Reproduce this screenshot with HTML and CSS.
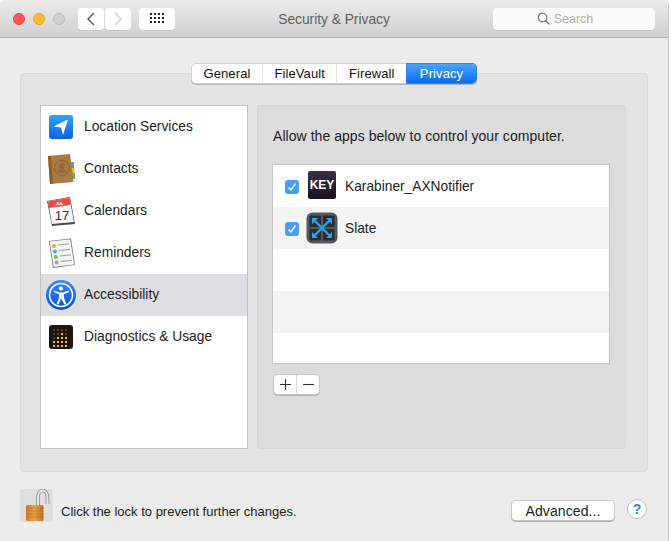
FILE: index.html
```html
<!DOCTYPE html>
<html lang="en">

<head>
	<meta charset="UTF-8">
	<title>Security &amp; Privacy</title>
	<link rel="stylesheet" href="styles.css">
</head>

<body>
	<div class="window">
		<div class="titlebar">
			<div class="lights">
				<span class="light red"></span>
				<span class="light yellow"></span>
				<span class="light off"></span>
			</div>
			<div class="nav">
				<button class="nav-btn" type="button">
					<svg width="10" height="14" viewBox="0 0 10 14"><path d="M8 1 2 7l6 6" fill="none" stroke="#555" stroke-width="1.4"/></svg>
				</button>
				<button class="nav-btn" type="button">
					<svg width="10" height="14" viewBox="0 0 10 14"><path d="M2 1l6 6-6 6" fill="none" stroke="#ccc" stroke-width="1.4"/></svg>
				</button>
			</div>
			<button class="grid-btn" type="button">
				<svg width="15" height="11" viewBox="0 0 15 11" fill="#222">
					<rect x="0" y="0" width="2" height="2"/><rect x="4" y="0" width="2" height="2"/><rect x="8" y="0" width="2" height="2"/><rect x="12" y="0" width="2" height="2"/>
					<rect x="0" y="4" width="2" height="2"/><rect x="4" y="4" width="2" height="2"/><rect x="8" y="4" width="2" height="2"/><rect x="12" y="4" width="2" height="2"/>
					<rect x="0" y="8" width="2" height="2"/><rect x="4" y="8" width="2" height="2"/><rect x="8" y="8" width="2" height="2"/><rect x="12" y="8" width="2" height="2"/>
				</svg>
			</button>
			<div class="title">Security &amp; Privacy</div>
			<div class="search">
				<svg width="13" height="13" viewBox="0 0 13 13"><circle cx="5.5" cy="5.5" r="4.3" fill="none" stroke="#666" stroke-width="1.1"/><path d="M8.6 8.6 12.4 12.4" stroke="#666" stroke-width="1.3"/></svg>
				<span>Search</span>
			</div>
		</div>

		<div class="content">
			<div class="group">
				<div class="tabs">
					<span class="tab">General</span>
					<span class="tab">FileVault</span>
					<span class="tab">Firewall</span>
					<span class="tab selected">Privacy</span>
				</div>
				<div class="panes">
					<ul class="services">
						<li class="service">
							<svg class="service-icon" viewBox="0 0 26 26">
								<defs><linearGradient id="loc" x1="0" y1="0" x2="0" y2="1"><stop offset="0" stop-color="#2fa4f7"/><stop offset="1" stop-color="#0a64e0"/></linearGradient></defs>
								<rect x="1" y="1" width="24" height="24" rx="3" fill="url(#loc)"/>
								<path d="M20 5.5 5.5 12.5 13 13.5 15 21z" fill="#fff"/>
							</svg>
							<span class="service-name">Location Services</span>
						</li>
						<li class="service">
							<svg class="tall-icon" viewBox="0 0 30 30">
								<rect x="25" y="8" width="3" height="6" fill="#5a9ad8"/>
								<rect x="25.500" y="14" width="3" height="5" fill="#e6b13c"/>
								<rect x="26" y="19" width="3" height="6" fill="#6db55a"/>
								<path d="M2 2 24 0 27.500 28 4 30z" fill="#ab7a40"/>
								<path d="M2 2 5 1.700 7 29.700 4 30z" fill="#8a5f2e"/>
								<circle cx="16" cy="14" r="7.500" fill="none" stroke="#8f6431" stroke-width="1"/>
								<circle cx="16" cy="12" r="3" fill="#96693a"/>
								<path d="M10.500 19c1-3.500 3-4 5.500-4s4.500.5 5.500 4z" fill="#96693a"/>
							</svg>
							<span class="service-name">Contacts</span>
						</li>
						<li class="service">
							<svg class="tall-icon" viewBox="0 0 30 30">
								<path d="M1 5 24 1 29 28 6 30z" fill="#4b4b4b"/>
								<path d="M2 5.500 23.500 1.800 28 26 6 28z" fill="#f8f8f8"/>
								<path d="M2 5.500 23.500 1.800 24.700 9 3 12z" fill="#ee4b45"/>
								<text x="13.500" y="8.800" class="cal-month">JUL</text>
								<text x="16" y="24" class="cal-day">17</text>
							</svg>
							<span class="service-name">Calendars</span>
						</li>
						<li class="service">
							<svg class="tall-icon" viewBox="0 0 30 30">
								<path d="M3 3 25 0.500 29 27 7 30z" fill="#6f6f6f"/>
								<path d="M3.800 3.600 24.300 1.300 28.200 26.400 7.600 29z" fill="#f4f4f0"/>
								<circle cx="8" cy="8" r="2" fill="#f2a32c"/>
								<circle cx="9" cy="13.500" r="2" fill="#3fa7f0"/>
								<circle cx="9.800" cy="19" r="2" fill="#63c94c"/>
								<circle cx="10.600" cy="24.500" r="2" fill="#c77fdc"/>
								<path d="M12 7 23 5.800M13 12.500 24 11.300M13.800 18 25 16.800M14.600 23.500 26 22.300" stroke="#888" stroke-width=".8"/>
							</svg>
							<span class="service-name">Reminders</span>
						</li>
						<li class="service active">
							<svg class="access-icon" viewBox="0 0 32 32">
								<defs><linearGradient id="acc" x1="0" y1="0" x2="0" y2="1"><stop offset="0" stop-color="#3b8cf5"/><stop offset="1" stop-color="#0b4fd6"/></linearGradient></defs>
								<circle cx="16" cy="16" r="15" fill="url(#acc)"/>
								<circle cx="16" cy="16" r="11.500" fill="none" stroke="#fff" stroke-width="1.500"/>
								<circle cx="16" cy="9.500" r="2" fill="#fff"/>
								<path d="M8.500 11.500 14 13.500h4l5.500-2 .5 1.500-5 2.200v3.500l2.300 6.300-1.700.6L16 19.500l-2.600 6.100-1.700-.6 2.300-6.300v-3.500L9 13z" fill="#fff"/>
							</svg>
							<span class="service-name">Accessibility</span>
						</li>
						<li class="service">
							<svg class="service-icon" viewBox="0 0 26 26">
								<rect x="1" y="1" width="24" height="24" rx="3" fill="#1d1511"/>
								<g fill="#5b3a1c">
									<rect x="5" y="5" width="2" height="2"/><rect x="9" y="5" width="2" height="2"/><rect x="13" y="5" width="2" height="2"/><rect x="17" y="5" width="2" height="2"/>
									<rect x="5" y="9" width="2" height="2"/><rect x="9" y="9" width="2" height="2"/><rect x="17" y="9" width="2" height="2"/>
									<rect x="5" y="13" width="2" height="2"/>
								</g>
								<g fill="#f5b74a">
									<rect x="13" y="9" width="2" height="2"/>
									<rect x="9" y="13" width="2" height="2"/><rect x="13" y="13" width="2" height="2"/><rect x="17" y="13" width="2" height="2"/>
									<rect x="5" y="17" width="2" height="2"/><rect x="9" y="17" width="2" height="2"/><rect x="13" y="17" width="2" height="2"/><rect x="17" y="17" width="2" height="2"/>
									<rect x="5" y="21" width="2" height="2"/><rect x="9" y="21" width="2" height="2"/><rect x="13" y="21" width="2" height="2"/><rect x="17" y="21" width="2" height="2"/>
								</g>
							</svg>
							<span class="service-name">Diagnostics &amp; Usage</span>
						</li>
					</ul>
					<div class="detail">
						<p class="detail-text">Allow the apps below to control your computer.</p>
						<div class="apps">
							<div class="app">
								<span class="check"><svg width="10" height="10" viewBox="0 0 10 10"><path d="M1.500 5.500 4 8l4.500-6.500" fill="none" stroke="#fff" stroke-width="1.400"/></svg></span>
								<span class="key-icon">KEY</span>
								Karabiner_AXNotifier
							</div>
							<div class="app">
								<span class="check"><svg width="10" height="10" viewBox="0 0 10 10"><path d="M1.500 5.500 4 8l4.500-6.500" fill="none" stroke="#fff" stroke-width="1.400"/></svg></span>
								<svg class="slate-icon" viewBox="0 0 32 32">
									<rect x="0.500" y="0.500" width="31" height="31" rx="6" fill="#55585c"/>
									<rect x="3.500" y="3.500" width="11.500" height="11.500" rx="1" fill="#2c2d30"/>
									<rect x="17" y="3.500" width="11.500" height="11.500" rx="1" fill="#2c2d30"/>
									<rect x="3.500" y="17" width="11.500" height="11.500" rx="1" fill="#2c2d30"/>
									<rect x="17" y="17" width="11.500" height="11.500" rx="1" fill="#2c2d30"/>
									<path d="M8 8 24 24M24 8 8 24" stroke="#2aa3e8" stroke-width="2.400"/>
									<path d="M6 6h6l-6 6zM26 6v6l-6-6zM6 26v-6l6 6zM26 26h-6l6-6z" fill="#2aa3e8"/>
								</svg>
								Slate
							</div>
							<div class="app"></div>
							<div class="app"></div>
							<div class="app"></div>
						</div>
						<div class="add-remove">
							<button class="pm" type="button"><svg width="13" height="13" viewBox="0 0 13 13"><path d="M6.500 1v11M1 6.500h11" stroke="#333" stroke-width="1.100"/></svg></button>
							<button class="pm" type="button"><svg width="13" height="13" viewBox="0 0 13 13"><path d="M1 6.500h11" stroke="#333" stroke-width="1.100"/></svg></button>
						</div>
					</div>
				</div>
			</div>

			<div class="footer">
				<div class="lock">
					<svg width="33" height="33" viewBox="0 0 33 33">
						<defs>
							<linearGradient id="brass" x1="0" y1="0" x2="1" y2="0"><stop offset="0" stop-color="#cf7d22"/><stop offset=".5" stop-color="#eaa647"/><stop offset="1" stop-color="#bf701d"/></linearGradient>
						</defs>
						<path d="M18 17V9C18-1 27.500-1 27.500 9V15" fill="none" stroke="#858c92" stroke-width="3.600"/>
						<path d="M18 17V9C18-1 27.500-1 27.500 9V15" fill="none" stroke="#e6e9ec" stroke-width="2"/>
						<rect x="6" y="16" width="17.500" height="16" rx="1.500" fill="url(#brass)"/>
						<path d="M6 19h17.500M6 22h17.500M6 25h17.500M6 28h17.500" stroke="#b56a1f" stroke-width=".6"/>
					</svg>
				</div>
				<span class="lock-text">Click the lock to prevent further changes.</span>
				<button class="advanced" type="button">Advanced...</button>
				<button class="help" type="button">?</button>
			</div>
		</div>
	</div>
</body>

</html>
```

FILE: styles.css
```css
* {
	box-sizing: border-box;
}

html,
body {
	height: 100%;
}

body {
	margin: 0;
	background-color: white;
	font-family: "Liberation Sans", Arial, sans-serif;
	font-size: 13px;
	color: #222;
	overflow: hidden;
}

button {
	font-family: inherit;
	padding: 0;
}

.window {
	width: 669px;
	height: 541px;
	background-color: #ececec;
	border-right: 1px solid #c9c9c9;
	border-radius: 5px 5px 0 0;
	overflow: hidden;
}

.titlebar {
	display: flex;
	align-items: center;
	height: 38px;
	padding-left: 13px;
	padding-right: 13px;
	background: linear-gradient(#ebebeb, #d0d0d0);
	border-bottom: 1px solid #b1b1b1;
}

.lights {
	display: flex;
	gap: 8px;
}

.light {
	width: 12px;
	height: 12px;
	border-radius: 50%;
}

.red {
	background-color: #fc5753;
	border: 1px solid #df4744;
}

.yellow {
	background-color: #fdbc2e;
	border: 1px solid #de9f34;
}

.off {
	background-color: #d0d0d0;
	border: 1px solid #bdbdbd;
}

.nav {
	display: flex;
	gap: 1px;
	margin-left: 13px;
}

.nav-btn {
	display: flex;
	align-items: center;
	justify-content: center;
	width: 26px;
	height: 22px;
	background-color: white;
	border: 0;
	border-radius: 4px;
	box-shadow: 0 1px 0 #c4c4c4;
}

.grid-btn {
	display: flex;
	align-items: center;
	justify-content: center;
	width: 36px;
	height: 22px;
	margin-left: 8px;
	background-color: white;
	border: 0;
	border-radius: 4px;
	box-shadow: 0 1px 0 #c4c4c4;
}

.title {
	width: 132px;
	margin-left: 93px;
	padding-top: 1px;
	text-align: center;
	color: #5f5f5f;
	font-size: 13.750px;
	white-space: nowrap;
}

.search {
	display: flex;
	align-items: center;
	justify-content: center;
	gap: 4px;
	width: 162px;
	height: 22px;
	margin-left: auto;
	padding-right: 18px;
	background-color: #fbfbfb;
	border-radius: 4px;
	box-shadow: 0 1px 0 #c4c4c4;
	color: #b0b0b0;
	font-size: 12.500px;
}

.content {
	padding: 35px 20px 0;
}

.group {
	height: 399px;
	background-color: #e3e3e3;
	border: 1px solid #dadada;
	border-radius: 4px;
}

.tabs {
	display: flex;
	width: 284px;
	height: 19px;
	margin: -10px auto 0;
	background-color: white;
	border-radius: 4px;
	box-shadow: 0 0 0 1px #d0d0d0, 0 1px 0 1px #b5b5b5;
}

.tab {
	display: flex;
	align-items: center;
	justify-content: center;
	flex: none;
	padding: 0 11.500px;
	color: #111;
	letter-spacing: 0.100px;
	border-right: 1px solid #e2e2e2;
}

.tab.selected {
	flex: auto;
	padding: 0;
	background: linear-gradient(#4ba3fb, #0a6cf2);
	box-shadow: 0 0 0 1px #2a85f5;
	color: white;
	border-right: 0;
	border-radius: 0 4px 4px 0;
}

.panes {
	display: flex;
	gap: 9px;
	padding: 22px 21px 0 19px;
}

.services {
	width: 208px;
	height: 344px;
	margin: 0;
	padding: 0;
	list-style: none;
	background-color: white;
	border: 1px solid #c3c3c3;
}

.service {
	display: flex;
	align-items: center;
	gap: 10px;
	height: 42px;
	padding-left: 7px;
	font-size: 13.800px;
}

.service-name {
	margin-bottom: 2px;
}

.service.active {
	background-color: #dcdee2;
}

.service-icon {
	width: 26px;
	height: 26px;
	flex: none;
}

.tall-icon {
	width: 30px;
	height: 30px;
	margin-left: -2px;
	margin-right: -2px;
	flex: none;
}

.access-icon {
	width: 32px;
	height: 32px;
	margin-left: -3px;
	margin-right: -3px;
	flex: none;
}

.cal-month {
	font-size: 4px;
	font-weight: bold;
	fill: white;
	text-anchor: middle;
}

.cal-day {
	font-size: 13px;
	fill: #333;
	text-anchor: middle;
}

.detail {
	width: 369px;
	height: 344px;
	padding: 23px 15px 0 14px;
	background-color: #dcdcdc;
	border: 1px solid #d6d6d6;
	border-radius: 3px;
}

.detail-text {
	margin: 0 0 20px 1px;
	line-height: 15px;
	font-size: 14px;
	letter-spacing: 0.050px;
}

.apps {
	height: 200px;
	background-color: white;
	border: 1px solid #c6c6c6;
}

.app {
	display: flex;
	align-items: center;
	height: 42px;
	padding-left: 12px;
	font-size: 13.750px;
}

.app:nth-child(even) {
	background-color: #f4f4f4;
}

.check {
	display: flex;
	align-items: center;
	justify-content: center;
	width: 14px;
	height: 14px;
	margin-top: 2px;
	margin-right: 9px;
	background-color: #4a9dfb;
	border-radius: 3px;
}

.key-icon {
	display: flex;
	align-items: center;
	justify-content: center;
	width: 28px;
	height: 28px;
	margin-bottom: 2px;
	margin-right: 9px;
	background: linear-gradient(#3a2f48, #17121f);
	border-radius: 2px;
	color: white;
	font-size: 12px;
	font-weight: bold;
}

.slate-icon {
	width: 32px;
	height: 32px;
	margin-left: -2px;
	margin-right: 7px;
}

.add-remove {
	display: flex;
	width: 45px;
	height: 19px;
	margin-top: 11px;
	margin-left: 2px;
	background-color: white;
	border-radius: 4px;
	box-shadow: 0 0 0 1px #c8c8c8, 0 1px 0 1px #b0b0b0;
}

.pm {
	display: flex;
	align-items: center;
	justify-content: center;
	flex: 1;
	background: none;
	border: 0;
}

.pm:first-child {
	border-right: 1px solid #dcdcdc;
}

.footer {
	display: flex;
	align-items: flex-start;
	margin-top: 17px;
	height: 33px;
}

.lock {
	width: 33px;
	height: 33px;
	background-color: #dedede;
	border-radius: 3px;
}

.lock-text {
	margin-left: 8px;
	margin-top: 15px;
}

.advanced {
	width: 102px;
	height: 19px;
	margin-left: auto;
	margin-top: 12px;
	background-color: white;
	border: 0;
	border-radius: 4px;
	box-shadow: 0 0 0 1px #c8c8c8, 0 1px 0 1px #adadad;
	font-size: 14px;
	color: #222;
	letter-spacing: 0.100px;
}

.help {
	width: 20px;
	height: 20px;
	margin-left: 13px;
	margin-right: 1px;
	margin-top: 10px;
	background-color: white;
	border: 1px solid #bdbdbd;
	border-radius: 50%;
	color: #2f7de8;
	font-size: 14px;
	font-weight: bold;
}
```
